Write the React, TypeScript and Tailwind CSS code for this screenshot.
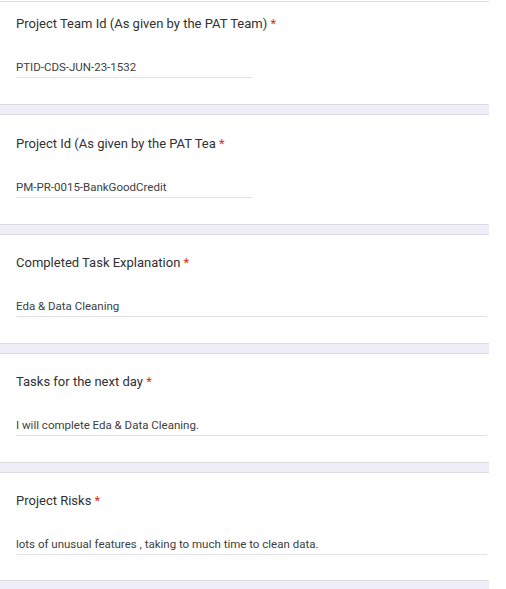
import React from 'react';

interface Question {
  title: string;
  answer: string;
  short?: boolean;
}

const questions: Question[] = [
  { title: 'Project Team Id (As given by the PAT Team)', answer: 'PTID-CDS-JUN-23-1532', short: true },
  { title: 'Project Id (As given by the PAT Tea', answer: 'PM-PR-0015-BankGoodCredit', short: true },
  { title: 'Completed Task Explanation', answer: 'Eda & Data Cleaning' },
  { title: 'Tasks for the next day', answer: 'I will complete Eda & Data Cleaning.' },
  { title: 'Project Risks', answer: 'lots of unusual features , taking to much time to clean data.' },
];

// card heights tuned per card: the first one is cut at the top of the screenshot
const cardClass = [
  'h-[102px] pt-3',
  'h-[109px] pt-[19px]',
  'h-[108px] pt-[18px]',
  'h-[108px] pt-[18px]',
  'h-[107px] pt-[18px]',
];

const App: React.FC = () => {
  return (
    <div className="w-[506px] h-[589px] overflow-hidden bg-white font-['Roboto',sans-serif] text-[#3c4043]">
      <div className="w-[489px] pt-px">
        <div className="border-t border-[#dadce0]" />
        {questions.map((q, index) => (
          <div key={index}>
            <div className={`bg-white pl-4 pr-[2px] ${cardClass[index]}`}>
              <div className="text-[13px] leading-5 text-[#303134]">
                {q.title} <span className="text-[#d93025]">*</span>
              </div>
              <div className={`mt-[25px] border-b border-[#e0e0e6] pb-[2px] ${q.short ? 'w-[236px]' : 'w-full'}`}>
                <div className="text-[11.5px] leading-4">{q.answer}</div>
              </div>
            </div>
            <div className="h-[11px] bg-[#efedf8] border-y border-[#dadce0]" />
          </div>
        ))}
      </div>
    </div>
  );
};

export default App;
